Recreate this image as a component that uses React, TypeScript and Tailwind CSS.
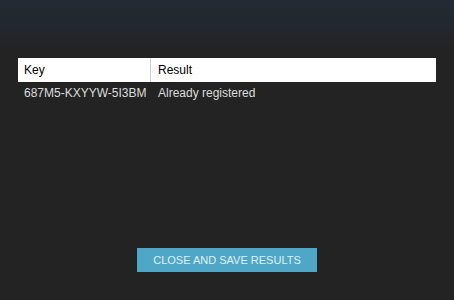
export default function App() {
  return (
    <div
      className="w-[454px] h-[300px] flex flex-col bg-[linear-gradient(to_bottom,#222a33_0px,#232830_25px,#232323_50px)] text-[12px]"
      style={{ fontFamily: '"Liberation Sans", Arial, sans-serif' }}
    >
      <div className="pt-[58px] pl-[18px] pr-[18px]">
        <div className="flex h-[24px] bg-white text-black">
          <div className="w-[133px] border-r border-[#d0d0d0] flex items-center pl-[6px]">Key</div>
          <div className="flex-1 flex items-center pl-[7px]">Result</div>
        </div>
        <div className="flex h-[22px] text-[#dcdcdc]">
          <div className="w-[134px] flex items-center pl-[6px]">687M5-KXYYW-5I3BM</div>
          <div className="flex-1 flex items-center pl-[6px]">Already registered</div>
        </div>
      </div>
      <div className="flex-1" />
      <div className="flex justify-center pb-[28px]">
        <button className="w-[180px] h-[24px] bg-[#4fa7c8] text-[#dff1f7] text-[11px]">
          CLOSE AND SAVE RESULTS
        </button>
      </div>
    </div>
  );
}
